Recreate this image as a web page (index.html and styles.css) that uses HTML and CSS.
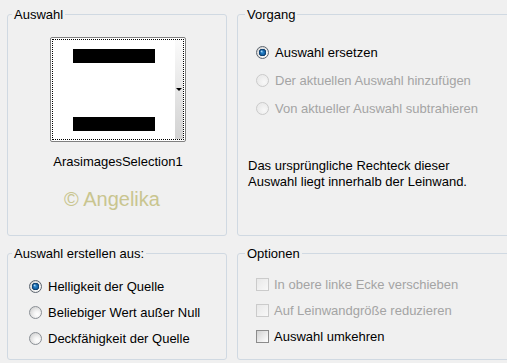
FILE: index.html
```html
<!DOCTYPE html>
<html lang="de">
<head>
    <meta charset="UTF-8">
    <title>Auswahl aus Alphakanal laden</title>
    <link rel="stylesheet" href="styles.css">
</head>
<body>
    <div class="dialog">
        <fieldset class="group group-select">
            <legend>Auswahl</legend>
            <div class="group-body">
                <div class="preview">
                    <div class="preview-frame">
                        <div class="preview-canvas">
                            <div class="bar"></div>
                            <div class="bar"></div>
                        </div>
                        <div class="preview-scroll"><span class="arrow"></span></div>
                    </div>
                </div>
                <div class="preview-name">ArasimagesSelection1</div>
                <div class="watermark">© Angelika</div>
            </div>
        </fieldset>

        <fieldset class="group group-mode">
            <legend>Vorgang</legend>
            <div class="group-body">
                <div class="options">
                    <label class="option"><input type="radio" name="mode" checked>Auswahl ersetzen</label>
                    <label class="option disabled"><input type="radio" name="mode" disabled>Der aktuellen Auswahl hinzufügen</label>
                    <label class="option disabled"><input type="radio" name="mode" disabled>Von aktueller Auswahl subtrahieren</label>
                </div>
                <p class="note">Das ursprüngliche Rechteck dieser<br>Auswahl liegt innerhalb der Leinwand.</p>
            </div>
        </fieldset>

        <fieldset class="group group-source">
            <legend>Auswahl erstellen aus:</legend>
            <div class="group-body">
                <label class="option row"><input type="radio" name="source" checked>Helligkeit der Quelle</label>
                <label class="option row"><input type="radio" name="source">Beliebiger Wert außer Null</label>
                <label class="option row"><input type="radio" name="source">Deckfähigkeit der Quelle</label>
            </div>
        </fieldset>

        <fieldset class="group group-options">
            <legend>Optionen</legend>
            <div class="group-body">
                <label class="option row disabled"><input type="checkbox" disabled>In obere linke Ecke verschieben</label>
                <label class="option row disabled"><input type="checkbox" disabled>Auf Leinwandgröße reduzieren</label>
                <label class="option row"><input type="checkbox">Auswahl umkehren</label>
            </div>
        </fieldset>
    </div>
</body>
</html>
```

FILE: styles.css
```css
* {
    box-sizing: border-box;
}
body {
    margin: 0;
    background-color: #f0f0f0;
    font-family: 'Liberation Sans', Arial, sans-serif;
    font-size: 13px;
    line-height: 15px;
    color: #000;
    overflow: hidden;
}
.dialog {
    display: grid;
    grid-template-columns: 220px 280px;
    grid-template-rows: 229px 114px;
    column-gap: 10px;
    row-gap: 10px;
    padding: 7px 0 0 7px;
    width: 520px;
}
.group {
    margin: 0;
    padding: 0;
    min-width: 0;
    border: 1px solid #d0d9e2;
    border-radius: 3px;
}
.group legend {
    margin-left: 4px;
    padding: 0 2px;
    line-height: 15px;
}
.group-mode legend,
.group-options legend {
    margin-left: 7px;
}

/* Auswahl */
.group-select .group-body {
    padding: 15px 0 0 2px;
    text-align: center;
}
.preview {
    width: 136px;
    height: 105px;
    margin: 0 auto;
    padding: 1px;
    border: 1px solid #808080;
    border-radius: 2px;
    background-color: #fff;
}
.preview-frame {
    height: 100%;
    border: 1px dotted #000;
    display: flex;
}
.preview-canvas {
    flex: 1;
    display: flex;
    flex-direction: column;
    justify-content: space-between;
    padding: 9px 0 8px 20px;
}
.bar {
    width: 82px;
    height: 14px;
    background-color: #000;
}
.preview-scroll {
    width: 8px;
    background: linear-gradient(#fbfbfb, #d2d2d2);
    display: flex;
    align-items: center;
    justify-content: center;
}
.arrow {
    width: 0;
    height: 0;
    border-left: 3px solid transparent;
    border-right: 3px solid transparent;
    border-top: 3px solid #000;
}
.preview-name {
    margin-top: 12px;
}
.watermark {
    margin-top: 18px;
    padding-right: 12px;
    font-size: 20px;
    line-height: 24px;
    color: #c9c58f;
}

/* Optionen */
.option {
    display: flex;
    align-items: center;
}
.option.disabled {
    color: #a4a4a4;
}
.group-mode .group-body {
    padding: 16px 0 0 10px;
}
.group-mode .options {
    padding-left: 8px;
}
.group-mode .option {
    height: 28px;
}
.note {
    margin: 36px 0 0;
    line-height: 16px;
}
.group-source .group-body {
    padding: 12px 0 0 21px;
}
.group-options .group-body {
    padding: 10px 0 0 18px;
}
.row {
    height: 26px;
}

input[type="radio"],
input[type="checkbox"] {
    appearance: none;
    -webkit-appearance: none;
    width: 13px;
    height: 13px;
    margin: 0 6px 0 0;
    flex-shrink: 0;
}
input[type="radio"] {
    border-radius: 50%;
    border: 1px solid #8a8f95;
    background: radial-gradient(circle at 65% 65%, #fff 0, #f4f4f4 3px, #d4d4d4 8px);
}
input[type="radio"]:checked {
    border-color: #5d6670;
    background:
        radial-gradient(circle at 42% 40%, #b8e4ff 0, transparent 1.5px),
        radial-gradient(circle at 50% 50%, #2f8fd8 0, #145e9f 2.5px, #08345f 3.5px, transparent 4px),
        radial-gradient(circle at 65% 65%, #fff 0, #f4f4f4 3px, #d4d4d4 8px);
}
input[type="radio"]:disabled {
    border-color: #cacaca;
    background: radial-gradient(circle at 65% 65%, #f8f8f8 0, #ececec 6px);
}
input[type="checkbox"] {
    margin-right: 5px;
    border: 1px solid #8c8c8c;
    background: linear-gradient(135deg, #d2d2d2, #f2f2f2 70%, #fff);
}
input[type="checkbox"]:disabled {
    border-color: #cbcbcb;
    background: linear-gradient(135deg, #e8e8e8, #f8f8f8);
}
```
